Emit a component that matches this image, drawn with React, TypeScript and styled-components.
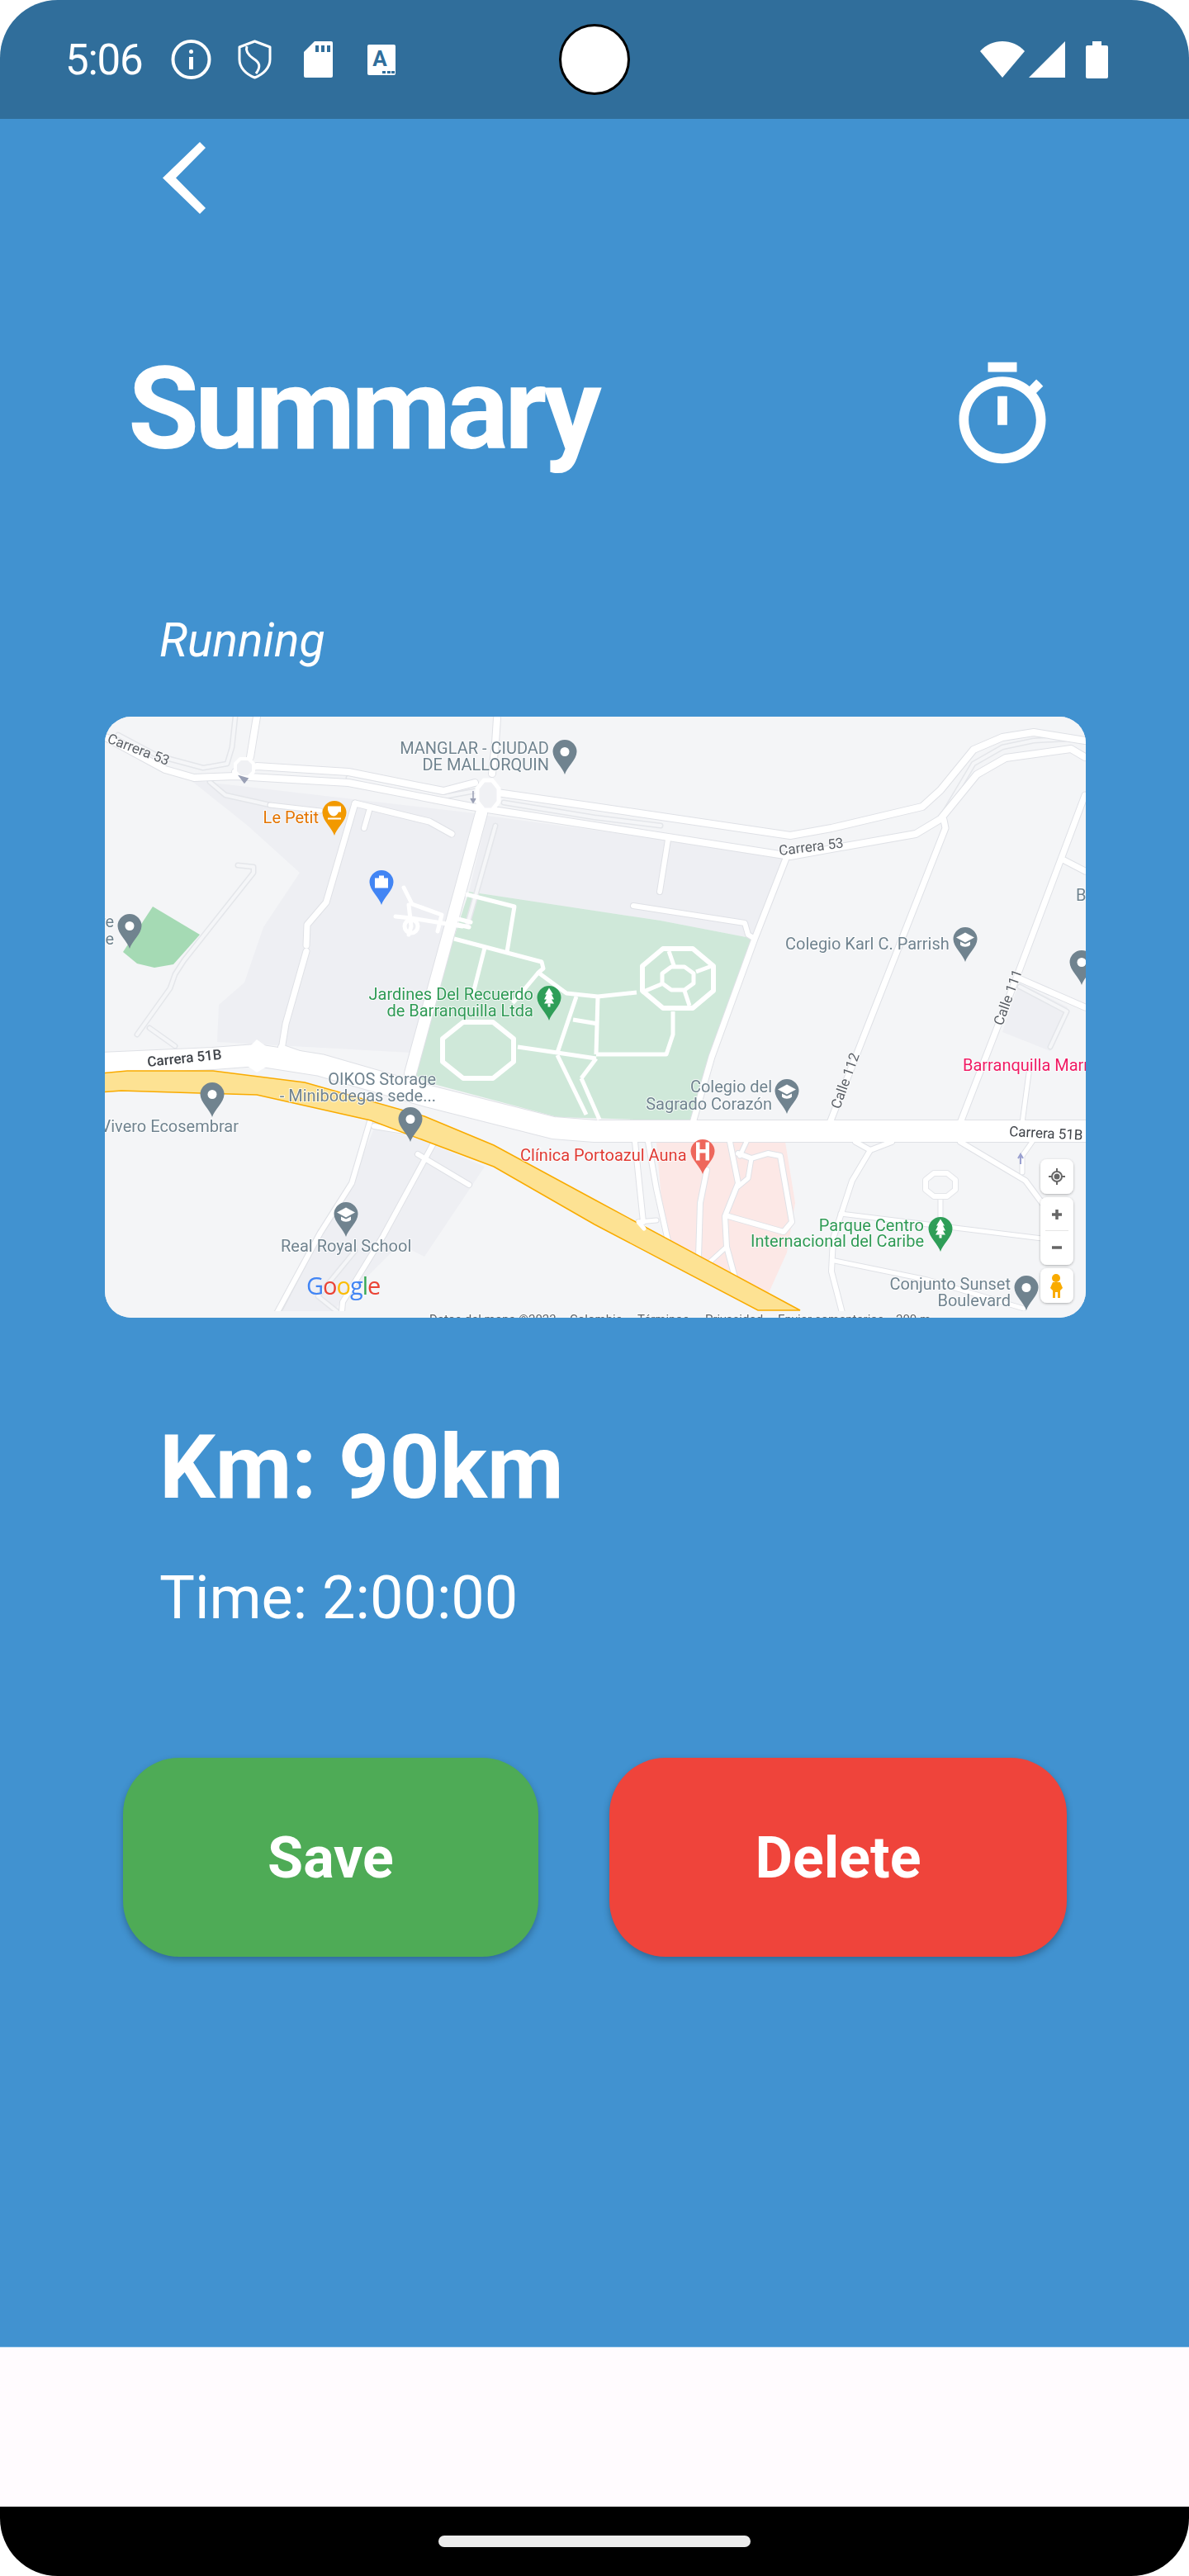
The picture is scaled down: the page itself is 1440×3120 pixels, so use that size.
import React from 'react';
import styled, {createGlobalStyle} from 'styled-components';

const GlobalStyle = createGlobalStyle`
  html, body {
    margin: 0;
    padding: 0;
    background: #fff;
    font-family: Roboto, "Liberation Sans", sans-serif;
  }
`;

const Phone = styled.div`
  width: 1440px;
  height: 3120px;
  display: flex;
  flex-direction: column;
  overflow: hidden;
  color: #fff;
`;

const StatusBar = styled.header`
  position: relative;
  flex: none;
  height: 144px;
  display: flex;
  align-items: center;
  justify-content: space-between;
  padding: 0 98px 0 79px;
  box-sizing: border-box;
  background: #306e9b;
  border-radius: 70px 70px 0 0;
`;

const StatusGroup = styled.div`
  display: flex;
  align-items: center;
`;

const Clock = styled.span`
  font-size: 51px;
  font-weight: 400;
  letter-spacing: -1.2px;
  line-height: 1;
  width: 93px;
`;

const StatusIcon = styled.svg<{$gap: number}>`
  display: block;
  flex: none;
  margin-left: ${p => p.$gap}px;
`;

const Camera = styled.div`
  position: absolute;
  left: 677px;
  top: 29px;
  width: 86px;
  height: 86px;
  box-sizing: border-box;
  border: 3px solid #000;
  border-radius: 50%;
  background: #fff;
`;

const Main = styled.main`
  flex: 1;
  display: flex;
  flex-direction: column;
  background: #4192d0;
  border-bottom: 1px solid #6fb0e0;
`;

const BackIcon = styled.svg`
  display: block;
  margin: 28px 0 0 197px;
`;

const TitleRow = styled.div`
  display: flex;
  justify-content: space-between;
  align-items: flex-start;
  margin-top: 163px;
  padding: 0 156px 0 155px;
  height: 154px;
`;

const Title = styled.h1`
  margin: 0;
  font-size: 140px;
  line-height: 146px;
  font-weight: 700;
  letter-spacing: -5.2px;
`;

const TimerIcon = styled.svg`
  display: block;
  margin-top: 11px;
  fill: #fff;
`;

const Activity = styled.div`
  margin: 167px 0 0 193px;
  font-size: 57px;
  line-height: 66px;
  font-style: italic;
  font-weight: 400;
`;

const MapFrame = styled.div`
  margin: 59px 0 0 127px;
  width: 1188px;
  height: 728px;
  border-radius: 32px;
  overflow: hidden;
  background: #f4f5f7;
`;

const MapPicture = styled.svg`
  display: block;
  filter: blur(0.4px);
`;

const Distance = styled.div`
  margin: 120px 0 0 193px;
  font-size: 107px;
  line-height: 124px;
  font-weight: 700;
`;

const Duration = styled.div`
  margin: 55px 0 0 193px;
  font-size: 72px;
  line-height: 82px;
  font-weight: 400;
`;

const ButtonRow = styled.div`
  display: flex;
  gap: 86px;
  margin: 152px 0 0 149px;
`;

const ActionButton = styled.button<{$color: string; $width: number}>`
  width: ${p => p.$width}px;
  height: 241px;
  border: 0;
  border-radius: 68px;
  background: ${p => p.$color};
  color: #fff;
  font-family: inherit;
  font-size: 70px;
  font-weight: 700;
  box-shadow: 0 4px 8px rgba(0, 0, 0, 0.28);
`;

const BlankStrip = styled.div`
  flex: none;
  height: 193px;
  background: #fffbfe;
`;

const NavBar = styled.nav`
  flex: none;
  height: 84px;
  display: flex;
  justify-content: center;
  padding-top: 35px;
  box-sizing: border-box;
  background: #000;
  border-radius: 0 0 70px 70px;
`;

const HomeHandle = styled.div`
  width: 378px;
  height: 14px;
  border-radius: 7px;
  background: #ececec;
`;

const tones: Record<string, string> = {
  grey: '#70838f',
  road: '#5a5f66',
  orange: '#e37400',
  green: '#2f9a55',
  red: '#e03a33',
  pink: '#f01a63',
  dark: '#3f4349',
  legal: '#5f6368',
};

const Label = styled.text<{$tone: string; $size?: number; $weight?: number}>`
  font-family: Roboto, "Liberation Sans", sans-serif;
  font-size: ${p => p.$size || 20}px;
  font-weight: ${p => p.$weight || 400};
  fill: ${p => tones[p.$tone]};
  stroke: rgba(255, 255, 255, 0.75);
  stroke-width: 2px;
  paint-order: stroke;
`;

const LogoText = styled.text`
  font-family: "Open Sans", Roboto, sans-serif;
  font-size: 29px;
  font-weight: 500;
  letter-spacing: -1px;
`;

const RoadCasing = styled.polyline<{$w: number}>`
  fill: none;
  stroke: #dfe1e6;
  stroke-width: ${p => p.$w + 2}px;
  stroke-linejoin: round;
  stroke-linecap: round;
`;

const RoadFill = styled.polyline<{$w: number}>`
  fill: none;
  stroke: #fff;
  stroke-width: ${p => p.$w}px;
  stroke-linejoin: round;
  stroke-linecap: round;
`;

const LaneOutline = styled.polyline`
  fill: none;
  stroke: #e4e6ea;
  stroke-width: 7px;
  stroke-linejoin: round;
  stroke-linecap: round;
`;

const LaneFill = styled.polyline`
  fill: none;
  stroke: #f5f6f8;
  stroke-width: 4px;
  stroke-linejoin: round;
  stroke-linecap: round;
`;

const ParkPath = styled.polyline`
  fill: none;
  stroke: #fff;
  stroke-width: 5px;
  stroke-linejoin: round;
`;

const Ring = styled.polygon<{$w: number; $fill?: string; $edge?: string}>`
  fill: ${p => p.$fill || 'none'};
  stroke: ${p => p.$edge || '#fff'};
  stroke-width: ${p => p.$w}px;
  stroke-linejoin: round;
`;

// eight corners round a centre, the map's little roundabouts are all octagons
const octagon = (cx: number, cy: number, rx: number, ry: number) =>
  Array.from({length: 8}, (_, i) => {
    const a = Math.PI / 8 + (i * Math.PI) / 4;
    return `${Math.round(cx + rx * Math.cos(a))},${Math.round(cy + ry * Math.sin(a))}`;
  }).join(' ');

// everything in the map uses full page coordinates, see the viewBox
const majorRoads: [number, string][] = [
  [8, '128,893 200,932 235,942 285,940 422,948 571,977 720,1000 957,1037 1024,1025 1109,1010 1139,992 1183,938 1218,918 1297,907 1314,917'],
  [8, '285,935 311,928 422,935 537,958 575,948'],
  [8, '602,960 720,977 957,1012 1007,1003 1117,977 1139,957 1179,908 1214,893 1252,887 1314,897'],
  [8, '602,870 600,900 596,937'],
  [8, '311,868 303,917'],
  [14, '583,985 497,1300'],
  [7, '953,1037 914,1137 862,1280 839,1360'],
  [7, '430,973 395,1093 372,1120 371,1145'],
  [7, '371,1152 346,1240 338,1290'],
  [7, '430,973 520,995 547,1010'],
  [6, '447,982 441,1003'],
  [7, '1143,993 1145,1003 1052,1240 1005,1360'],
  [7, '1314,963 1230,1187 1163,1360'],
  [7, '1234,1185 1314,1220'],
  [7, '1289,1042 1314,1055'],
  [6, '809,1017 799,1080'],
  [6, '767,1097 902,1118 906,1132 914,1137'],
  [6, '340,1268 388,1285 505,1322'],
  [5, '1246,1300 1238,1360'],
  [6, '449,1355 426,1433 388,1493 330,1600'],
  [6, '526,1383 464,1497 415,1577 413,1600'],
  [6, '453,1364 490,1370'],
  [6, '769,1383 779,1480'],
  [6, '785,1383 795,1440 809,1503'],
  [5, '773,1480 795,1478'],
  [6, '856,1417 848,1457 846,1523'],
  [6, '884,1383 894,1433 878,1473 880,1510 890,1547'],
  [5, '880,1510 858,1530'],
  [5, '904,1383 896,1400'],
  [6, '894,1397 910,1403 930,1397 945,1400 959,1480 949,1492 882,1473'],
  [5, '910,1403 906,1427 894,1437'],
  [6, '1036,1383 1054,1393 1080,1383'],
  [6, '1054,1393 1032,1430 1009,1500 1007,1540 1020,1590'],
  [6, '1163,1383 1242,1430 1262,1457'],
  [5, '1018,1470 1262,1500'],
  [5, '1011,1527 1123,1550 1240,1585'],
  [5, '1139,1452 1139,1477'],
  [5, '1250,1383 1238,1400 1238,1420'],
  [5, '327,975 388,982'],
  [6, '506,1398 568,1435'],
];

const lanes = [
  '143,890 190,915 246,930 275,925 281,905 285,868',
  '288,1048 307,1050 307,1057 223,1163 212,1180 206,1197 166,1253',
  '181,1245 212,1267',
  '254,947 273,963 327,975',
  '422,942 537,965 575,958',
  '610,972 720,990 800,1000',
  '1139,992 1179,925 1214,905 1252,897 1290,895',
  '600,1000 566,1120',
  '1235,1195 1292,1225 1272,1268',
  '388,1492 340,1585',
  '430,1515 385,1570 410,1590',
];

const parkPaths = [
  '564,1083 623,1098 614,1153',
  '550,1137 656,1165 658,1173 652,1178 686,1203 724,1207 771,1202',
  '587,1148 572,1207',
  '652,1178 621,1215',
  '627,1268 675,1275 722,1282',
  '675,1275 698,1207',
  '694,1235 724,1240',
  '675,1278 710,1350',
  '724,1207 722,1277',
  '722,1277 807,1277 815,1253 815,1225',
  '810,1152 817,1172',
  '862,1170 843,1177',
  '777,1202 801,1192',
  '829,1200 835,1218',
  '704,1306 722,1282',
  '704,1306 726,1356',
];

function Pin({x, y, color, children}: {x: number; y: number; color: string; children?: React.ReactNode}) {
  return (
    <g transform={`translate(${x} ${y})`}>
      <path d="M0 0C-2-8-14.5-18-14.5-27.5A14.5 14.5 0 1 1 14.5-27.5C14.5-18 2-8 0 0Z" fill={color} />
      <g transform="translate(0 -27.5)">
        {children || <circle r="5.5" fill="#fff" />}
      </g>
    </g>
  );
}

const SchoolGlyph = () => (
  <g fill="#fff">
    <path d="M0-8-11-2 0 4 11-2Z" />
    <path d="M-6 3V7C-3 10 3 10 6 7V3L0 6Z" />
  </g>
);

const TreeGlyph = () => (
  <g fill="#fff">
    <path d="M0-12-5-4H-3L-6 2H-3L-6 7H6L3 2H6L3-4H5Z" />
    <rect x="-1.5" y="7" width="3" height="4" />
  </g>
);

function MapView() {
  return (
    <MapPicture width="1188" height="728" viewBox="127 868 1188 728">
      <rect x="127" y="868" width="1188" height="728" fill="#f4f5f7" />

      <polygon fill="#eeeff3" points="231,945 575,985 498,1275 263,1262 265,1217 296,1190 319,1123 363,1057 300,1000" />
      <polygon fill="#eeeff3" points="590,988 953,1037 914,1137 800,1115 720,1103 568,1080" />
      <polygon fill="#eeeff3" points="453,1367 510,1380 587,1413 514,1522 484,1507 395,1596 334,1596 422,1440" />
      <polygon fill="#eeeff3" points="1234,1190 1293,1220 1272,1273 1214,1250" />
      <polygon fill="#cfe8d9" points="568,1080 720,1103 800,1115 914,1137 835,1358 675,1353 514,1310 497,1297" />
      <polygon fill="#a5dab4" points="185,1098 242,1132 210,1168 187,1172 166,1167 149,1153" />
      <polygon fill="#fce8e6" points="795,1383 951,1383 963,1457 953,1517 930,1568 805,1500" />

      {lanes.map(points => <LaneOutline key={points} points={points} />)}
      {lanes.map(points => <LaneFill key={points} points={points} />)}
      {majorRoads.map(([w, points]) => <RoadCasing key={points} $w={w} points={points} />)}

      <RoadCasing $w={26} points="120,1288 258,1282 311,1278 388,1290 520,1328 670,1366 720,1370 1320,1370" />
      {majorRoads.map(([w, points]) => <RoadFill key={points} $w={w} points={points} />)}
      <RoadFill $w={26} points="120,1288 258,1282 311,1278 388,1290 520,1328 670,1366 720,1370 1320,1370" />
      <polygon fill="#fff" points="298,1272 311,1259 326,1270 326,1290 311,1299 298,1290" />

      {parkPaths.map(points => <ParkPath key={points} points={points} />)}
      <Ring $w={6} points={octagon(821, 1185, 47, 39)} />
      <Ring $w={5} points={octagon(821, 1185, 21, 15)} />
      <Ring $w={6} points={octagon(579, 1272, 47, 37)} />

      <Ring $w={4} $fill="#f0f1f4" points={octagon(296, 930, 12, 12)} />
      <Ring $w={5} $fill="#f0f1f4" points={octagon(591, 963, 14, 20)} />
      <Ring $w={8} $edge="#e3e5e9" points={octagon(1139, 1435, 20, 15)} />
      <Ring $w={6} points={octagon(1139, 1435, 20, 15)} />
      <circle cx="498" cy="1122" r="8" fill="#eeeff3" stroke="#fff" strokeWidth="5" />
      <RoadFill $w={5} points="489,1075 499,1095 535,1108 530,1128" />
      <RoadFill $w={5} points="479,1110 498,1112 560,1122" />
      <RoadFill $w={5} points="495,1096 498,1122 495,1132" />
      <RoadFill $w={5} points="555,1113 570,1117" />
      <RoadFill $w={5} points="555,1120 568,1123" />

      <polygon
        fill="#fde293"
        stroke="#f9ab00"
        strokeWidth="1.5"
        points="120,1300 154,1297 258,1297 369,1311 514,1352 598,1387 720,1453 969,1587 918,1587 720,1483 598,1413 449,1357 311,1326 147,1321 120,1323"
      />
      <rect x="127" y="1588" width="1188" height="8" fill="#f4f5f7" />
      <RoadFill $w={5} points="773,1480 780,1488" />

      <Label $tone="grey" x="665" y="913" textAnchor="end">MANGLAR - CIUDAD</Label>
      <Label $tone="grey" x="665" y="933" textAnchor="end">DE MALLORQUIN</Label>
      <Pin x={684} y={938} color="#70838f" />
      <Label $tone="orange" x="386" y="997" textAnchor="end">Le Petit</Label>
      <Pin x={405} y={1012} color="#f29900">
        <path d="M-8-8H8V-1H5C4 2 1 4-1 4-4 4-7 1-8-4ZM-8 6H8V8H-8Z" fill="#fff" />
      </Pin>
      <Pin x={462} y={1096} color="#4285f4">
        <path d="M-8-5H-3V-8H3V-5H8V7H-8Z" fill="#fff" />
      </Pin>
      <Label $tone="grey" x="138" y="1123" textAnchor="end">re</Label>
      <Label $tone="grey" x="138" y="1144" textAnchor="end">be</Label>
      <Pin x={157} y={1149} color="#70838f" />
      <Label $tone="green" x="646" y="1211" textAnchor="end">Jardines Del Recuerdo</Label>
      <Label $tone="green" x="646" y="1231" textAnchor="end">de Barranquilla Ltda</Label>
      <Pin x={665} y={1236} color="#2f9e58"><TreeGlyph /></Pin>
      <Label $tone="grey" x="951" y="1150">Colegio Karl C. Parrish</Label>
      <Pin x={1169} y={1165} color="#70838f"><SchoolGlyph /></Pin>
      <Label $tone="grey" x="1303" y="1091">Bosque</Label>
      <Pin x={1310} y={1193} color="#70838f" />

      <Label $tone="road" $size={17} transform="translate(129 899) rotate(21)">Carrera 53</Label>
      <Label $tone="road" $size={17} transform="translate(944 1036) rotate(-7)">Carrera 53</Label>
      <Label $tone="road" $size={17} transform="translate(1214 1243) rotate(-70)">Calle 111</Label>
      <Label $tone="road" $size={17} transform="translate(1017 1344) rotate(-70)">Calle 112</Label>
      <Label $tone="dark" $size={17} $weight={500} transform="translate(179 1292) rotate(-6)">Carrera 51B</Label>
      <Label $tone="dark" $size={17} transform="translate(1222 1376) rotate(3)">Carrera 51B</Label>

      <Label $tone="grey" x="528" y="1314" textAnchor="end">OIKOS Storage</Label>
      <Label $tone="grey" x="528" y="1334" textAnchor="end">- Minibodegas sede...</Label>
      <Pin x={497} y={1383} color="#70838f" />
      <Pin x={257} y={1353} color="#70838f" />
      <Label $tone="grey" x="289" y="1371" textAnchor="end">Vivero Ecosembrar</Label>
      <Pin x={419} y={1498} color="#70838f"><SchoolGlyph /></Pin>
      <Label $tone="grey" x="340" y="1516">Real Royal School</Label>
      <Label $tone="red" x="630" y="1406">Clínica Portoazul Auna</Label>
      <Pin x={851} y={1422} color="#ee675c">
        <path d="M-8-11H-3.500V-2.500H3.500V-11H8V11H3.500V2H-3.500V11H-8Z" fill="#fff" />
      </Pin>
      <Label $tone="grey" x="935" y="1323" textAnchor="end">Colegio del</Label>
      <Label $tone="grey" x="935" y="1344" textAnchor="end">Sagrado Corazón</Label>
      <Pin x={953} y={1349} color="#70838f"><SchoolGlyph /></Pin>
      <Label $tone="pink" x="1166" y="1297">Barranquilla Marriott</Label>
      <Label $tone="green" x="1119" y="1491" textAnchor="end">Parque Centro</Label>
      <Label $tone="green" x="1119" y="1510" textAnchor="end">Internacional del Caribe</Label>
      <Pin x={1139} y={1516} color="#2f9e58"><TreeGlyph /></Pin>
      <Label $tone="grey" x="1224" y="1562" textAnchor="end">Conjunto Sunset</Label>
      <Label $tone="grey" x="1224" y="1582" textAnchor="end">Boulevard</Label>
      <Pin x={1243} y={1587} color="#70838f" />

      <LogoText x="371" y="1568">
        <tspan fill="#4285f4">G</tspan>
        <tspan fill="#ea4335">o</tspan>
        <tspan fill="#fbbc05">o</tspan>
        <tspan fill="#4285f4">g</tspan>
        <tspan fill="#34a853">l</tspan>
        <tspan fill="#ea4335">e</tspan>
      </LogoText>

      <Label $tone="legal" $size={15} x="520" y="1603">Datos del mapa ©2023</Label>
      <Label $tone="legal" $size={15} x="690" y="1603">Colombia</Label>
      <Label $tone="legal" $size={15} x="772" y="1603">Términos</Label>
      <Label $tone="legal" $size={15} x="854" y="1603">Privacidad</Label>
      <Label $tone="legal" $size={15} x="942" y="1603">Enviar comentarios</Label>
      <Label $tone="legal" $size={15} x="1085" y="1603">200 m</Label>

      <defs>
        <filter id="ctl" x="-20%" y="-20%" width="140%" height="140%">
          <feDropShadow dx="0" dy="1" stdDeviation="1.5" floodOpacity="0.3" />
        </filter>
      </defs>
      <g filter="url(#ctl)" fill="#fff">
        <rect x="1260" y="1404" width="40" height="42" rx="8" />
        <rect x="1260" y="1450" width="40" height="82" rx="8" />
        <rect x="1260" y="1536" width="40" height="42" rx="8" />
      </g>
      <circle cx="1280" cy="1425" r="6" fill="none" stroke="#666" strokeWidth="2" />
      <circle cx="1280" cy="1425" r="3.500" fill="#666" />
      <path d="M1280 1415V1419M1280 1431V1435M1270 1425H1274M1286 1425H1290" stroke="#666" strokeWidth="2" />
      <path d="M1280 1465V1477M1274 1471H1286M1274 1511H1286" stroke="#666" strokeWidth="3.500" />
      <rect x="1266" y="1490" width="28" height="1" fill="#e6e6e6" />
      <circle cx="1279" cy="1548" r="5" fill="#f9ab00" />
      <path d="M1272 1560L1275 1553H1284L1287 1560 1284 1563V1572H1281V1565H1278V1572H1275V1563Z" fill="#f9ab00" />

      <path d="M290 940L300 943 296 948ZM573 958V972M570 967L573 972 576 967" fill="#9aa0b5" stroke="#9aa0b5" strokeWidth="1.500" />
      <path d="M1236 1398V1410M1233 1403L1236 1398 1239 1403" fill="none" stroke="#9aa0d0" strokeWidth="2" />
    </MapPicture>
  );
}

export default function App() {
  return (
    <Phone>
      <GlobalStyle />
      <StatusBar>
        <StatusGroup>
          <Clock>5:06</Clock>
          <StatusIcon $gap={35} width="49" height="48" viewBox="0 0 49 48">
            <ellipse cx="24.500" cy="24" rx="22" ry="22" fill="none" stroke="#fff" strokeWidth="4" />
            <rect x="22" y="21" width="5" height="15" fill="#fff" />
            <rect x="22" y="12" width="5" height="5" rx="2.500" fill="#fff" />
          </StatusIcon>
          <StatusIcon $gap={32} width="41" height="48" viewBox="0 0 41 48">
            <path d="M20.500 2L39 9V24C39 34 31 42 20.500 46 10 42 2 34 2 24V9Z" fill="none" stroke="#fff" strokeWidth="3" strokeLinejoin="round" />
            <path d="M11 8C9 14 13 19 19 23 27 28 28 33 22 41" fill="none" stroke="#fff" strokeWidth="3" />
          </StatusIcon>
          <StatusIcon $gap={39} width="35" height="44" viewBox="0 0 35 44">
            <path d="M13 0H33Q35 0 35 2V42Q35 44 33 44H2Q0 44 0 42V13Z" fill="#fff" />
            <path d="M14 5H18V13H14ZM21 5H25V13H21ZM28 5H32V13H28Z" fill="#306e9b" />
          </StatusIcon>
          <StatusIcon $gap={42} width="34" height="37" viewBox="0 0 34 37">
            <rect width="34" height="37" rx="2" fill="#fff" />
            <text x="15" y="26" textAnchor="middle" fontFamily="Roboto, sans-serif" fontWeight="700" fontSize="26" fill="#306e9b">A</text>
            <path d="M18 32h4v3h-4zM24 32h4v3h-4zM29 32h4v3h-4z" fill="#306e9b" />
          </StatusIcon>
        </StatusGroup>
        <StatusGroup>
          <StatusIcon $gap={0} width="54" height="44" viewBox="0 0 54 44">
            <path d="M0 12C14-4 40-4 54 12L27 44Z" fill="#fff" />
          </StatusIcon>
          <StatusIcon $gap={5} width="44" height="44" viewBox="0 0 44 44">
            <path d="M44 0V44H0Z" fill="#fff" />
          </StatusIcon>
          <StatusIcon $gap={25} width="27" height="45" viewBox="0 0 27 45">
            <path d="M8 0H19V5H25Q27 5 27 7V43Q27 45 25 45H2Q0 45 0 43V7Q0 5 2 5H8Z" fill="#fff" />
          </StatusIcon>
        </StatusGroup>
        <Camera />
      </StatusBar>

      <Main>
        <BackIcon width="52" height="87" viewBox="0 0 52 87">
          <path d="M45 0L52 7 16 43.500 52 80 45 87 0 43.500Z" fill="#fff" />
        </BackIcon>
        <TitleRow>
          <Title>Summary</Title>
          <TimerIcon width="140" height="140" viewBox="0 0 24 24">
            <path d="M15 1H9v2h6V1zm-4 13h2V8h-2v6zm8.030-6.610l1.420-1.420c-.43-.51-.9-.99-1.410-1.410l-1.420 1.420C16.070 4.740 14.120 4 12 4c-4.970 0-9 4.030-9 9s4.020 9 9 9 9-4.030 9-9c0-2.120-.74-4.070-1.970-5.610zM12 20c-3.870 0-7-3.130-7-7s3.130-7 7-7 7 3.130 7 7-3.130 7-7 7z" />
          </TimerIcon>
        </TitleRow>
        <Activity>Running</Activity>
        <MapFrame>
          <MapView />
        </MapFrame>
        <Distance>Km: 90km</Distance>
        <Duration>Time: 2:00:00</Duration>
        <ButtonRow>
          <ActionButton $color="#4eab56" $width={503}>Save</ActionButton>
          <ActionButton $color="#ef443b" $width={554}>Delete</ActionButton>
        </ButtonRow>
      </Main>
      <BlankStrip />
      <NavBar>
        <HomeHandle />
      </NavBar>
    </Phone>
  );
}
